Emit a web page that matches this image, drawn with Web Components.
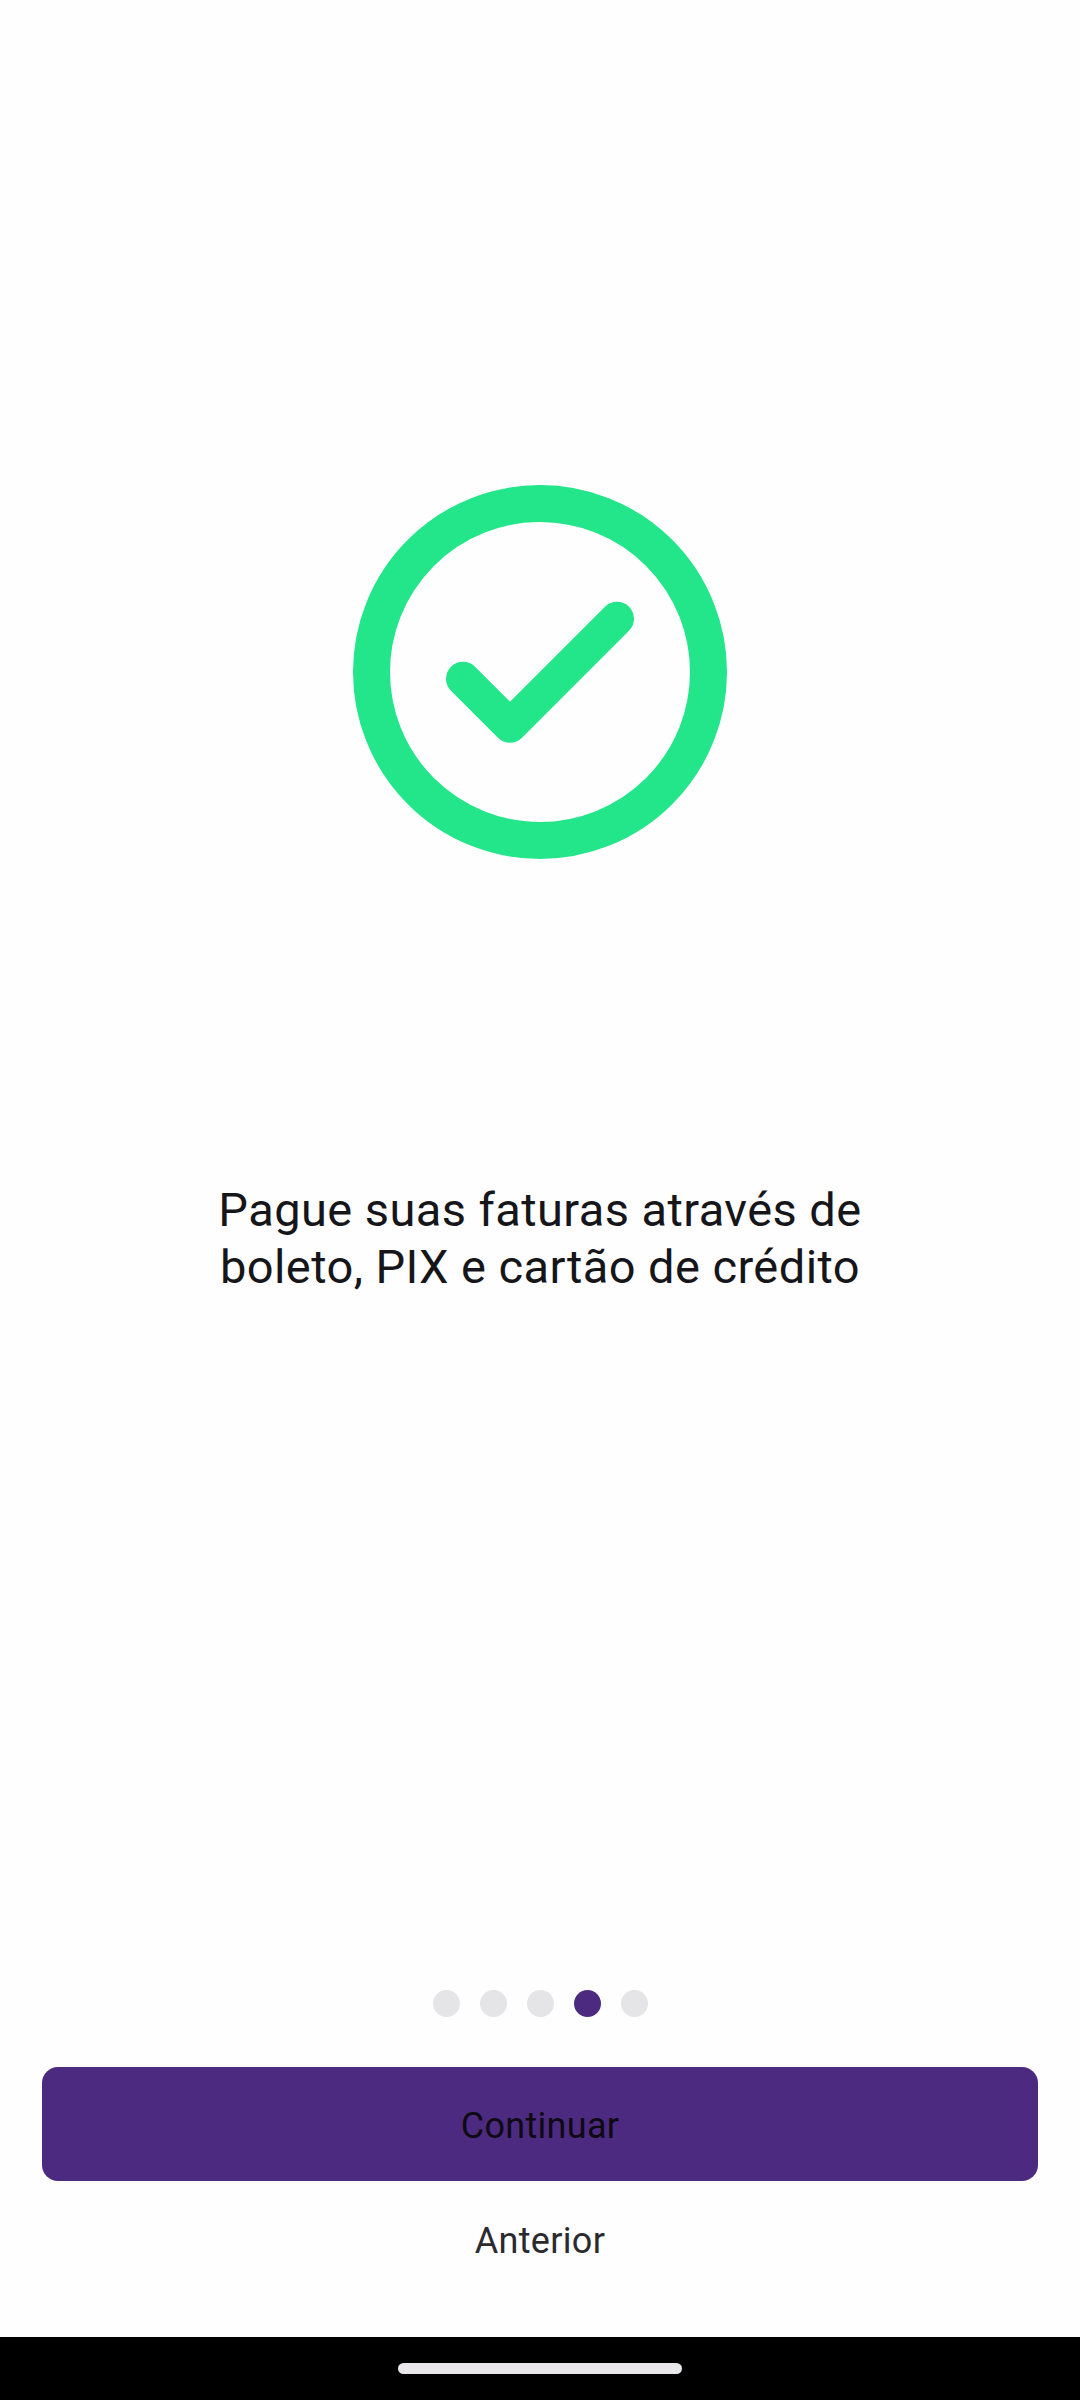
<!doctype html>
<html lang="pt-BR"><head><meta charset="utf-8"><title>Onboarding</title>
<style>html,body{margin:0;padding:0;background:#fefefe}body{font-family:Roboto,"Liberation Sans",sans-serif}</style>
</head><body>
<onboard-screen>
  <status-icon></status-icon>
  <onboard-text>Pague suas faturas através de<br>boleto, PIX e cartão de crédito</onboard-text>
  <page-dots slot="footer" count="5" active="3"></page-dots>
  <primary-button slot="footer">Continuar</primary-button>
  <text-button slot="footer">Anterior</text-button>
</onboard-screen>
<script>
function def(name, html){
  customElements.define(name, class extends HTMLElement{
    constructor(){super();this.attachShadow({mode:'open'}).innerHTML=html;}
  });
}
def('onboard-screen',`<style>
:host{display:flex;flex-direction:column;width:1080px;height:2400px;background:#fefefe;overflow:hidden}
.main{flex:1;display:flex;flex-direction:column;align-items:center;padding-top:485px;min-height:0}
.footer{display:flex;flex-direction:column;align-items:stretch;padding:0 42px}
.nav{height:63px;background:#000;display:flex;justify-content:center;padding-top:26px;box-sizing:border-box}
.pill{width:284px;height:11px;border-radius:6px;background:#e9e7ea}
</style><div class="main"><slot></slot></div><div class="footer"><slot name="footer"></slot></div><div class="nav"><div class="pill"></div></div>`);
def('status-icon',`<style>:host{display:block;width:374px;height:374px}svg{display:block}</style>
<svg width="374" height="374" viewBox="353 485 374 374" aria-hidden="true">
<circle cx="540" cy="672" r="168.5" fill="none" stroke="#23e58a" stroke-width="37"/>
<path d="M463 678.7 L510 725.7 L617 618.7" fill="none" stroke="#23e58a" stroke-width="34" stroke-linecap="round" stroke-linejoin="round"/>
</svg>`);
def('onboard-text',`<style>:host{display:block;margin-top:322px;font-size:47px;line-height:57px;color:#16161a;text-align:center;letter-spacing:.42px}</style><slot></slot>`);
customElements.define('page-dots',class extends HTMLElement{
  constructor(){super();
    const n=+this.getAttribute('count'),a=+this.getAttribute('active');
    let d='';for(let i=0;i<n;i++)d+=`<span class="${i===a?'on':''}"></span>`;
    this.attachShadow({mode:'open'}).innerHTML=`<style>:host{display:flex;justify-content:center;gap:20px;margin-bottom:50px}
    span{width:27px;height:27px;border-radius:50%;background:#e5e4e7}.on{background:#4b2a80}</style>${d}`;
  }
});
def('primary-button',`<style>:host{display:flex;align-items:center;justify-content:center;height:114px;box-sizing:border-box;padding-top:3px;border-radius:16px;background:#4b2a80;color:#0e0a14;font-size:36px;letter-spacing:.3px}</style><slot></slot>`);
def('text-button',`<style>:host{display:flex;align-items:center;justify-content:center;height:118px;box-sizing:border-box;padding-top:2px;margin-bottom:38px;color:#2b2a2e;font-size:36px;letter-spacing:.3px}</style><slot></slot>`);
</script>
</body></html>
